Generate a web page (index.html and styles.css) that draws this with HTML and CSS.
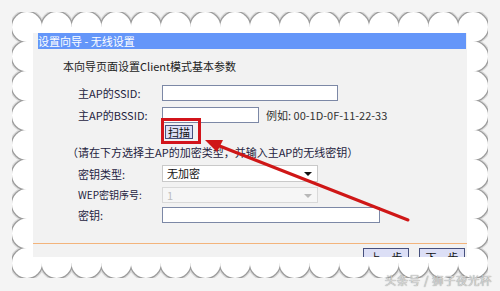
FILE: index.html
```html
<!DOCTYPE html>
<html>

<head>
    <meta charset="utf-8">
    <meta name="viewport" content="width=device-width">
    <title>设置向导 - 无线设置</title>
    <link rel="stylesheet" href="styles.css">
</head>

<body>
    <div id="shot">

        <div id="frame">
            <!-- scalloped paper edge -->
            <svg class="edge" viewBox="0 0 476 266" width="476" height="266">
                <defs>
                    <g id="dots">
                        <circle cx="15" cy="15" r="15"/><circle cx="44.7" cy="15" r="15"/><circle cx="74.5" cy="15" r="15"/><circle cx="104.2" cy="15" r="15"/>
                        <circle cx="133.9" cy="15" r="15"/><circle cx="163.7" cy="15" r="15"/><circle cx="193.4" cy="15" r="15"/><circle cx="223.1" cy="15" r="15"/>
                        <circle cx="252.9" cy="15" r="15"/><circle cx="282.6" cy="15" r="15"/><circle cx="312.3" cy="15" r="15"/><circle cx="342.1" cy="15" r="15"/>
                        <circle cx="371.8" cy="15" r="15"/><circle cx="401.5" cy="15" r="15"/><circle cx="431.3" cy="15" r="15"/><circle cx="461" cy="15" r="15"/>
                        <circle cx="15" cy="251" r="15"/><circle cx="44.7" cy="251" r="15"/><circle cx="74.5" cy="251" r="15"/><circle cx="104.2" cy="251" r="15"/>
                        <circle cx="133.9" cy="251" r="15"/><circle cx="163.7" cy="251" r="15"/><circle cx="193.4" cy="251" r="15"/><circle cx="223.1" cy="251" r="15"/>
                        <circle cx="252.9" cy="251" r="15"/><circle cx="282.6" cy="251" r="15"/><circle cx="312.3" cy="251" r="15"/><circle cx="342.1" cy="251" r="15"/>
                        <circle cx="371.8" cy="251" r="15"/><circle cx="401.5" cy="251" r="15"/><circle cx="431.3" cy="251" r="15"/><circle cx="461" cy="251" r="15"/>
                        <circle cx="15" cy="44.5" r="15"/><circle cx="15" cy="74" r="15"/><circle cx="15" cy="103.5" r="15"/><circle cx="15" cy="133" r="15"/>
                        <circle cx="15" cy="162.5" r="15"/><circle cx="15" cy="192" r="15"/><circle cx="15" cy="221.5" r="15"/>
                        <circle cx="461" cy="44.5" r="15"/><circle cx="461" cy="74" r="15"/><circle cx="461" cy="103.5" r="15"/><circle cx="461" cy="133" r="15"/>
                        <circle cx="461" cy="162.5" r="15"/><circle cx="461" cy="192" r="15"/><circle cx="461" cy="221.5" r="15"/>
                    </g>
                </defs>
                <use href="#dots" fill="none" stroke="#dadada" stroke-width="5"/>
                <use href="#dots" fill="none" stroke="#9c9c9c" stroke-width="2.6"/>
                <use href="#dots" fill="#fff"/>
                <rect x="15" y="15" width="446" height="236" fill="#fff"/>
            </svg>

            <div id="panel">
                <div class="title">设置向导 - 无线设置</div>
                <div class="intro">本向导页面设置Client模式基本参数</div>

                <div class="row r-ssid">
                    <label>主AP的SSID:</label>
                    <input type="text" class="txt w-ssid">
                </div>
                <div class="row r-bssid">
                    <label>主AP的BSSID:</label>
                    <input type="text" class="txt w-bssid">
                    <span class="hint">例如: 00-1D-0F-11-22-33</span>
                </div>
                <div class="row r-scan">
                    <span class="mark">
                        <button class="btn scan">扫描</button>
                    </span>
                </div>
                <div class="note">（请在下方选择主AP的加密类型，并输入主AP的无线密钥）</div>

                <div class="row r-type">
                    <label>密钥类型:</label>
                    <span class="sel">
                        <select><option>无加密</option></select>
                    </span>
                </div>
                <div class="row r-wep">
                    <label class="small">WEP密钥序号:</label>
                    <span class="sel off">
                        <select disabled><option>1</option></select>
                    </span>
                </div>
                <div class="row r-key">
                    <label>密钥:</label>
                    <input type="text" class="txt w-key">
                </div>

                <div class="line"></div>

                <div class="foot">
                    <button class="btn step">上一步</button>
                    <button class="btn step">下一步</button>
                </div>
            </div>
        </div>

        <!-- red annotation arrow -->
        <svg class="arrow" viewBox="0 0 500 291" width="500" height="291">
            <line x1="408" y1="220" x2="217" y2="145" stroke="#cf1717" stroke-width="3" stroke-linecap="round"/>
            <polygon points="205,140 223,140 217,152" fill="#cf1717"/>
        </svg>

        <div class="mark-text">头条号 / 狮子夜光杯</div>
    </div>
</body>

</html>
```

FILE: styles.css
```css
body {
    margin: 0;
    background: #f4f4f4;
    font-family: "Noto Sans CJK SC", "Liberation Sans", sans-serif;
    font-size: 11px;
    color: #1e2340;
}

#shot {
    position: relative;
    width: 500px;
    height: 291px;
    padding: 12px;
    box-sizing: border-box;
    overflow: hidden;
}

#frame {
    position: relative;
    width: 476px;
    height: 266px;
    padding: 21px;
    box-sizing: border-box;
}

.edge {
    position: absolute;
    left: 0;
    top: 0;
}

#panel {
    position: relative;
    height: 224px;
    background: #f2f2f2;
    overflow: hidden;
    display: flex;
    flex-direction: column;
}

.title {
    height: 16px;
    margin: 0 1px 0 5px;
    background: #6496f9;
    color: #fff;
    line-height: 16px;
}

.intro {
    margin-top: 9px;
    padding-left: 30px;
    line-height: 16px;
    color: #222;
}

.row {
    display: flex;
    align-items: center;
    height: 16px;
    flex-shrink: 0;
    padding-left: 45px;
}

.row label {
    width: 84px;
    line-height: 16px;
}

.row label.small {
    font-size: 10px;
}

.r-ssid { margin-top: 11px; }
.r-bssid { margin-top: 6px; }
.r-scan { margin-top: 2px; height: 14px; padding-left: 132px; }
.r-type { margin-top: 5px; height: 17px; }
.r-wep { margin-top: 5px; }
.r-key { margin-top: 4px; }

.txt {
    height: 16px;
    margin: 0;
    padding: 0 3px;
    box-sizing: border-box;
    border: 1px solid #7c88a6;
    background: #fff;
    font: inherit;
}

.w-ssid { width: 176px; }
.w-bssid { width: 97px; }
.w-key { width: 218px; }

.hint {
    margin-left: 7px;
    color: #333;
    line-height: 16px;
}

.btn {
    margin: 0;
    padding: 0 2px;
    box-sizing: border-box;
    border: 1px solid #46507e;
    background: #dcdff6;
    color: #111;
    font: inherit;
    line-height: 12px;
    white-space: nowrap;
}

.mark {
    position: relative;
    display: inline-block;
    height: 14px;
}

/* red box drawn over the scan button */
.mark::after {
    content: "";
    position: absolute;
    left: -4px;
    top: -7px;
    right: -8px;
    bottom: -5px;
    border: 3px solid #d2141b;
}

.scan {
    display: block;
    height: 14px;
    padding: 0 2px;
}

.note {
    margin-top: 5px;
    padding-left: 34px;
    line-height: 16px;
    flex-shrink: 0;
}

.sel {
    position: relative;
    display: inline-block;
}

.sel select {
    display: block;
    width: 156px;
    height: 17px;
    margin: 0;
    padding: 0 0 0 4px;
    border: 1px solid #c9c9c9;
    background: #fff;
    font: inherit;
    line-height: 15px;
    color: #111;
    appearance: none;
    -webkit-appearance: none;
    border-radius: 0;
}

.sel::after {
    content: "";
    position: absolute;
    right: 6px;
    top: 7px;
    border-left: 4px solid transparent;
    border-right: 4px solid transparent;
    border-top: 4px solid #111;
}

.sel.off select {
    height: 16px;
    background: #f8f8f8;
    color: #a8a8a8;
    border-color: #cfcfcf;
}

.sel.off::after {
    border-top-color: #b8b8b8;
}

.line {
    height: 1px;
    flex-shrink: 0;
    margin-top: 20px;
    background: #f3b47c;
}

.foot {
    display: flex;
    justify-content: flex-end;
    gap: 10px;
    flex-shrink: 0;
    margin: 4px 2px 0 0;
}

.step {
    width: 46px;
    height: 19px;
    line-height: 17px;
}

.arrow {
    position: absolute;
    left: 0;
    top: 0;
    pointer-events: none;
}

.mark-text {
    position: absolute;
    right: 8px;
    bottom: 3px;
    font-size: 11.5px;
    color: #d8d8d8;
    text-shadow: 0 0 1px #6f6f6f;
    letter-spacing: 0.5px;
}
```
